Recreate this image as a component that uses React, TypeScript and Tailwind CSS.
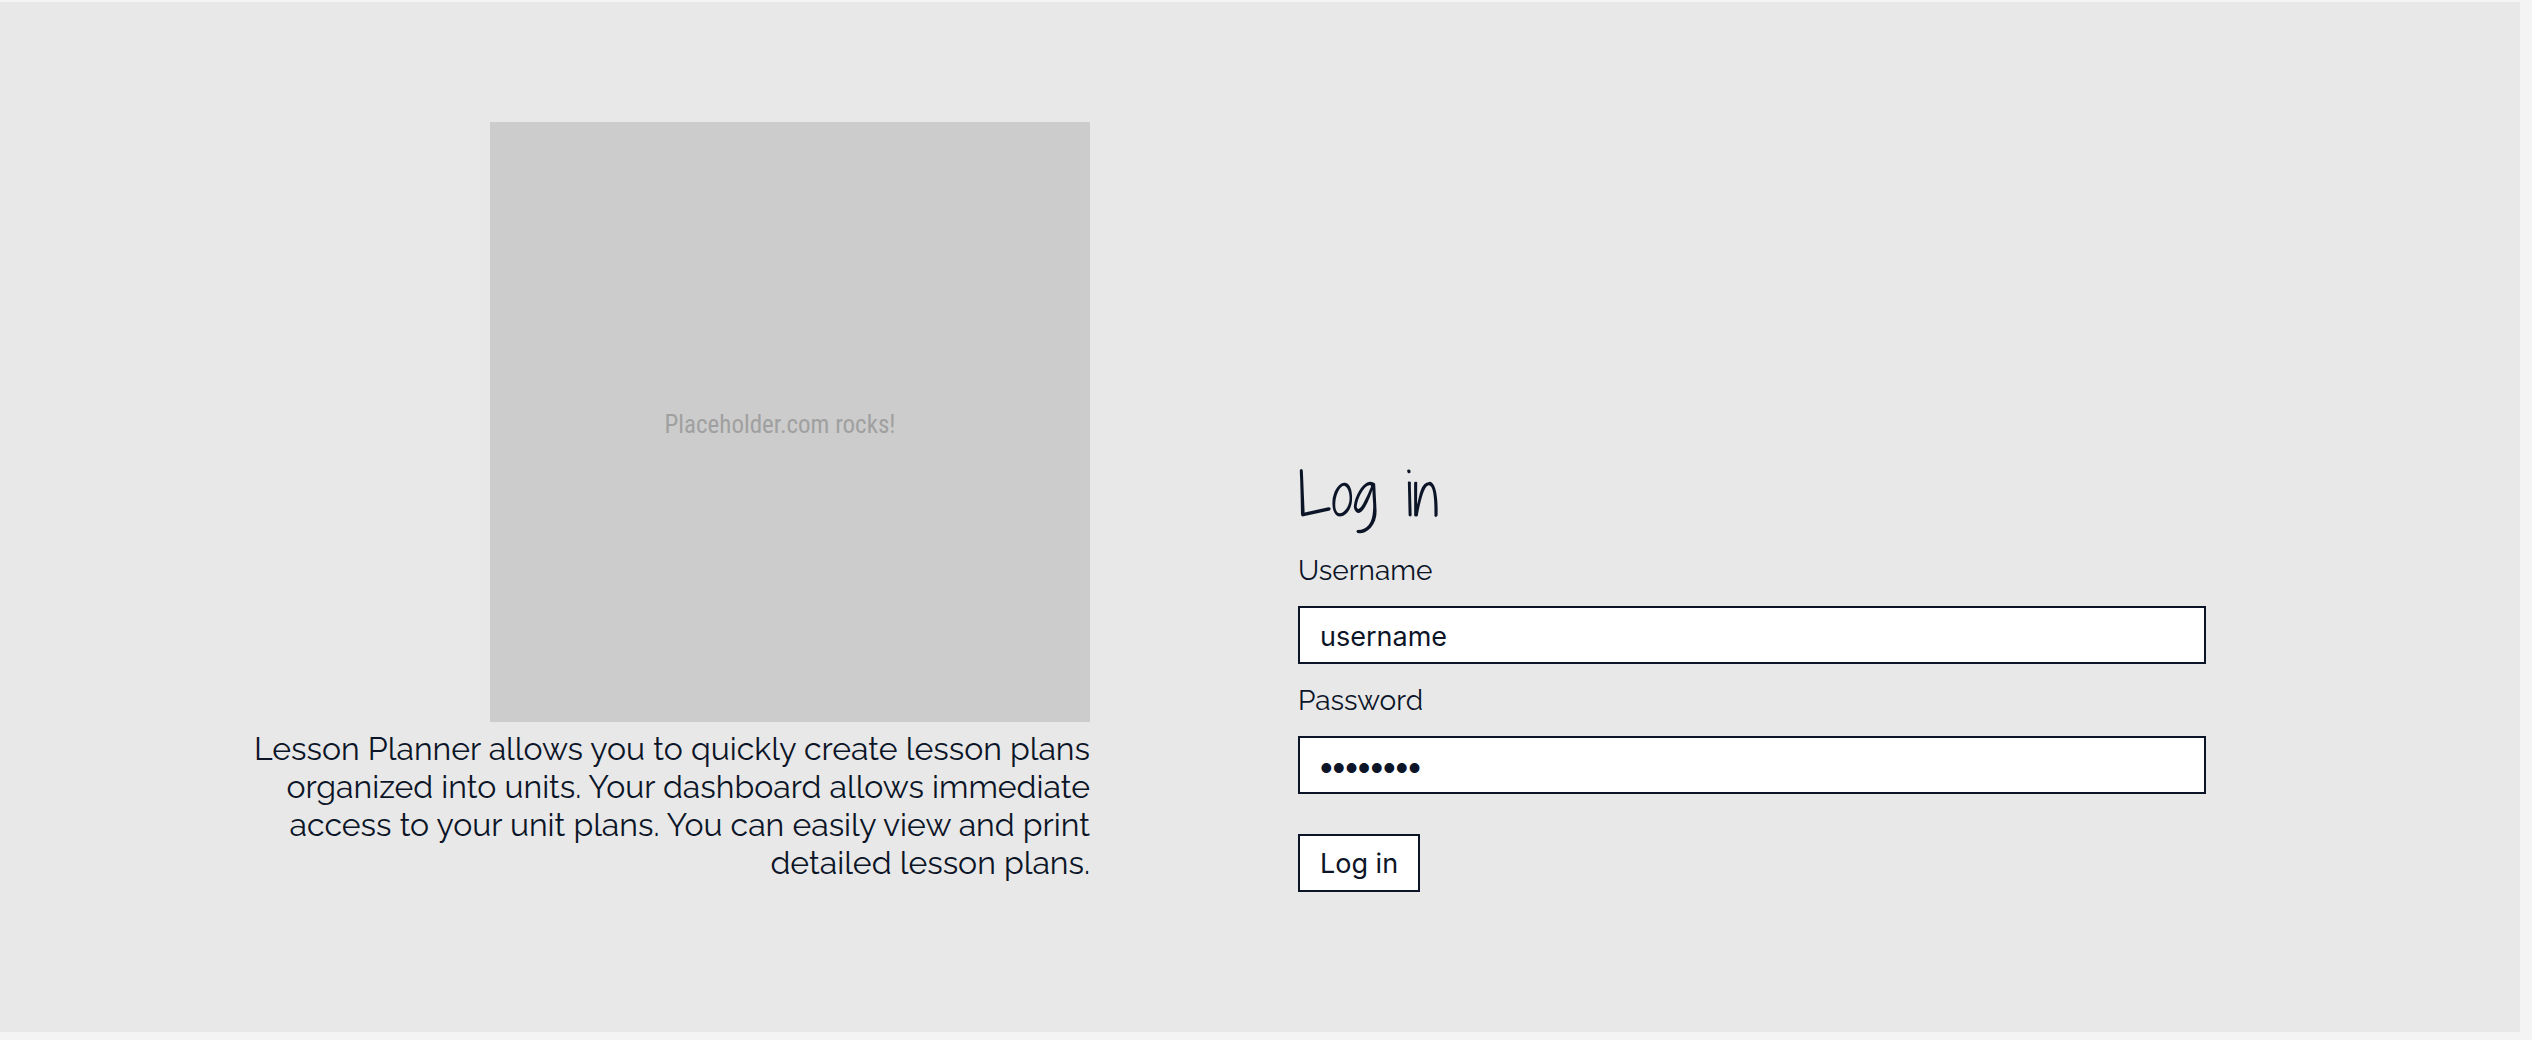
import { useState } from 'react';

const fieldClass =
  'mt-4 block w-full h-[58px] border-2 border-[#0c1527] bg-white px-5 text-[#0c1527] outline-none';

function Intro() {
  return (
    <section className="flex flex-col items-end pl-[240px]">
      <div
        role="img"
        aria-label="Placeholder.com rocks!"
        className="flex aspect-square w-full max-w-[600px] items-center justify-center bg-[#cccccc] pr-5 pt-1.5"
      >
        <span className='font-["Roboto_Condensed","Arial_Narrow","Roboto",sans-serif] text-[25px] text-[#a0a0a0]'>
          Placeholder.com rocks!
        </span>
      </div>
      <p className="mt-2 mb-[30px] text-right text-[32px] leading-[38px]">
        Lesson Planner allows you to quickly create lesson plans organized into units. Your dashboard
        allows immediate access to your unit plans. You can easily view and print detailed lesson
        plans.
      </p>
    </section>
  );
}

function LoginForm() {
  const [username, setUsername] = useState('username');
  const [password, setPassword] = useState('password');

  return (
    <form className="mb-5 w-full max-w-[908px] self-end" onSubmit={(e) => e.preventDefault()}>
      <h1 className='font-["Shadows_Into_Light_Two","Shadows_Into_Light",cursive] text-[56px] leading-[80px] font-normal'>
        Log in
      </h1>
      <label htmlFor="username" className="mt-[18px] block text-[28px] leading-[38px]">
        Username
      </label>
      <input
        id="username"
        type="text"
        value={username}
        onChange={(e) => setUsername(e.target.value)}
        className={`${fieldClass} pt-0.5 font-["Inter",sans-serif] text-[27px]`}
      />
      <label htmlFor="password" className="mt-[18px] block text-[28px] leading-[38px]">
        Password
      </label>
      <input
        id="password"
        type="password"
        value={password}
        onChange={(e) => setPassword(e.target.value)}
        className={`${fieldClass} pt-1.5 font-["Liberation_Sans",sans-serif] text-[36px]`}
      />
      <button
        type="submit"
        className='mt-10 block h-[58px] border-2 border-[#0c1527] bg-white px-5 pt-0.5 font-["Inter",sans-serif] text-[27px]'
      >
        Log in
      </button>
    </form>
  );
}

export default function App() {
  return (
    <div className='min-h-screen bg-[#f4f4f4] pt-0.5 pr-3 pb-2 font-["Raleway","Lato",sans-serif] text-[#0c1527]'>
      <main className="grid grid-cols-[1090fr_1222fr] gap-x-[208px] bg-[#e8e8e8] pt-[120px] pb-[120px]">
        <Intro />
        <LoginForm />
      </main>
    </div>
  );
}
